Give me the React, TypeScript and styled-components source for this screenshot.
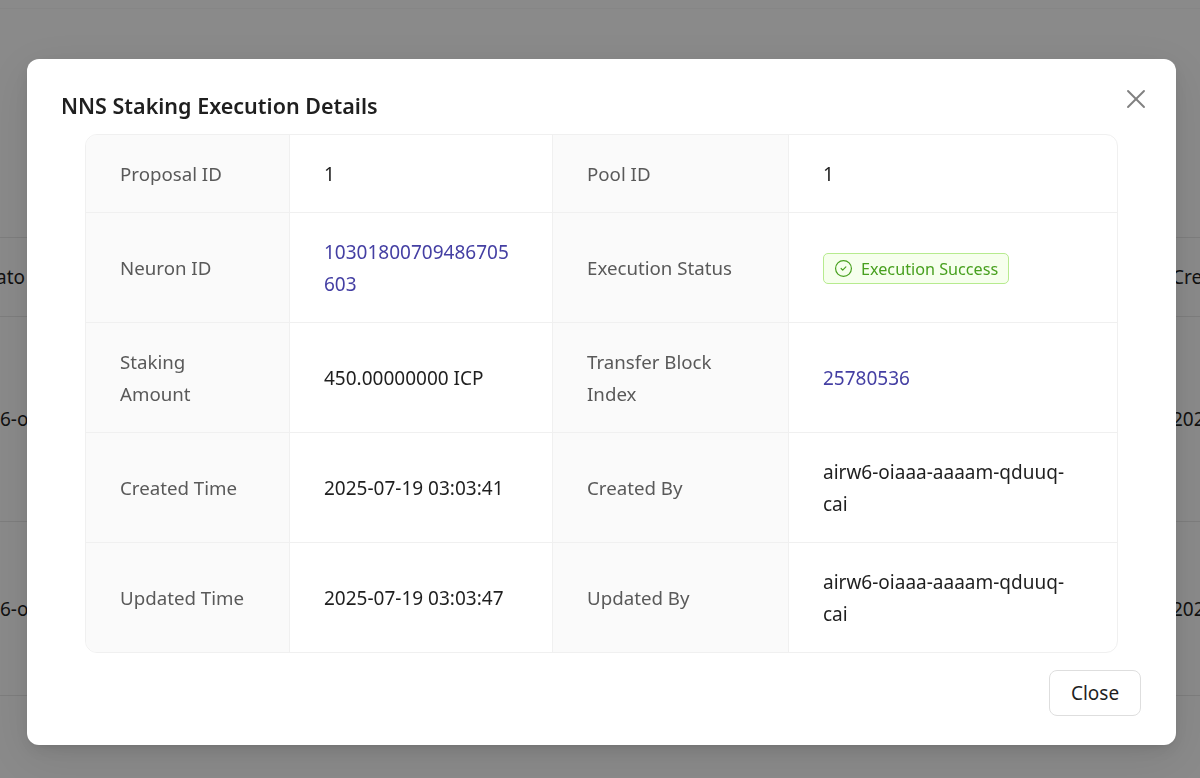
import React, { FC } from 'react'
import styled, { createGlobalStyle } from 'styled-components'
import { CircleCheck, X } from 'lucide-react'

const GlobalStyle = createGlobalStyle`
	html, body {
		margin: 0;
		padding: 0;
		height: 100%;
		background: #fff;
		font-family: "Noto Sans", "Open Sans", "Liberation Sans", sans-serif;
		overflow: hidden;
	}
	* {
		box-sizing: border-box;
	}
`

const Page = styled.div`
	height: 778px;
	overflow: hidden;
`

const TopBar = styled.div`
	height: 9px;
	margin-bottom: 228px;
	border-bottom: 1px solid #f8f8f8;
`

const BackRow = styled.div<{ $height: number }>`
	display: flex;
	justify-content: space-between;
	align-items: center;
	height: ${({ $height }) => $height}px;
	border-top: 1px solid #e8e8e8;
	margin: 0 -28px 0 0;
	font-size: 19px;
	color: #1f1f1f;
`

const BackCell = styled.span<{ $width: number }>`
	width: ${({ $width }) => $width}px;
	white-space: nowrap;
	overflow: hidden;
`

const BackCellEnd = styled(BackCell)`
	direction: rtl;
`

const Overlay = styled.div`
	position: fixed;
	inset: 0;
	background: rgba(0, 0, 0, 0.46);
	padding: 59px 0 0 27px;
`

const Modal = styled.div`
	position: relative;
	width: 1149px;
	height: 686px;
	padding: 32px 35px 0 34px;
	background: #fff;
	border-radius: 12px;
	box-shadow: 0 6px 16px 0 rgba(0, 0, 0, 0.08), 0 3px 6px -4px rgba(0, 0, 0, 0.12), 0 12px 48px 6px rgba(0, 0, 0, 0.08);
`

const Title = styled.h3`
	margin: 0;
	height: 43px;
	font-size: 21.5px;
	line-height: 30px;
	font-weight: 600;
	color: #1f1f1f;
`

const CloseIcon = styled.button`
	position: absolute;
	top: 24px;
	right: 24px;
	display: flex;
	padding: 0;
	border: 0;
	background: none;
	color: #808080;
`

const Details = styled.div`
	display: grid;
	grid-template-columns: 203px 263px 236px 329px;
	margin-left: 24px;
	width: 1033px;
	border: 1px solid #f0f0f0;
	border-radius: 12px;
	overflow: hidden;
`

const Cell = styled.div<{ $last?: boolean; $first?: boolean }>`
	display: flex;
	align-items: center;
	padding: 22.5px 34px;
	font-size: 19px;
	line-height: 32px;
	color: #1f1f1f;
	border-bottom: ${({ $last }) => ($last ? 'none' : '1px solid #f0f0f0')};
	border-left: ${({ $first }) => ($first ? 'none' : '1px solid #f0f0f0')};
`

const Label = styled(Cell)`
	font-size: 18.7px;
	background: #fafafa;
	color: #595959;
`

const Value = styled.span`
	min-width: 0;
	overflow-wrap: anywhere;
`

const ValueLink = styled.a`
	min-width: 0;
	color: #443fa3;
	word-break: break-all;
	text-decoration: none;
`

const Tag = styled.span`
	display: inline-flex;
	align-items: center;
	gap: 8px;
	height: 31px;
	margin-top: 2px;
	padding: 0 10px;
	font-size: 16.2px;
	color: #48a01f;
	background: #f6ffed;
	border: 1px solid #b7eb8f;
	border-radius: 5px;
	white-space: nowrap;
`

const Footer = styled.div`
	display: flex;
	justify-content: flex-end;
	margin-top: 17px;
`

const CloseButton = styled.button`
	width: 92px;
	height: 46px;
	font: inherit;
	font-size: 19px;
	color: #1f1f1f;
	background: #fff;
	border: 1px solid #dedede;
	border-radius: 8px;
`

type Row = { label: string; value: React.ReactNode; last?: boolean }

const DetailRow: FC<{ left: Row; right: Row }> = ({ left, right }) => (
	<>
		<Label $first $last={left.last}>
			{left.label}
		</Label>
		<Cell $last={left.last}>{left.value}</Cell>
		<Label $last={right.last}>{right.label}</Label>
		<Cell $last={right.last}>{right.value}</Cell>
	</>
)

const App = () => (
	<>
		<GlobalStyle />
		<Page>
			<TopBar />
			<BackRow $height={79}>
				<BackCellEnd $width={25}>Creato</BackCellEnd>
				<BackCell $width={56}>Created</BackCell>
			</BackRow>
			<BackRow $height={205}>
				<BackCell $width={40}>6-oiaaa</BackCell>
				<BackCell $width={56}>2025-07</BackCell>
			</BackRow>
			<BackRow $height={174}>
				<BackCell $width={40}>6-oiaaa</BackCell>
				<BackCell $width={56}>2025-07</BackCell>
			</BackRow>
			<BackRow $height={83} />
		</Page>
		<Overlay>
			<Modal>
				<Title>NNS Staking Execution Details</Title>
				<CloseIcon aria-label="Close">
					<X size={32} strokeWidth={1.4} />
				</CloseIcon>
				<Details>
					<DetailRow
						left={{ label: 'Proposal ID', value: <Value>1</Value> }}
						right={{ label: 'Pool ID', value: <Value>1</Value> }}
					/>
					<DetailRow
						left={{ label: 'Neuron ID', value: <ValueLink href="#">10301800709486705603</ValueLink> }}
						right={{
							label: 'Execution Status',
							value: (
								<Tag>
									<CircleCheck size={19} strokeWidth={1.5} />
									Execution Success
								</Tag>
							),
						}}
					/>
					<DetailRow
						left={{ label: 'Staking Amount', value: <Value>450.00000000 ICP</Value> }}
						right={{ label: 'Transfer Block Index', value: <ValueLink href="#">25780536</ValueLink> }}
					/>
					<DetailRow
						left={{ label: 'Created Time', value: <Value>2025-07-19 03:03:41</Value> }}
						right={{ label: 'Created By', value: <Value>airw6-oiaaa-aaaam-qduuq-cai</Value> }}
					/>
					<DetailRow
						left={{ label: 'Updated Time', value: <Value>2025-07-19 03:03:47</Value>, last: true }}
						right={{ label: 'Updated By', value: <Value>airw6-oiaaa-aaaam-qduuq-cai</Value>, last: true }}
					/>
				</Details>
				<Footer>
					<CloseButton>Close</CloseButton>
				</Footer>
			</Modal>
		</Overlay>
	</>
)

export default App
